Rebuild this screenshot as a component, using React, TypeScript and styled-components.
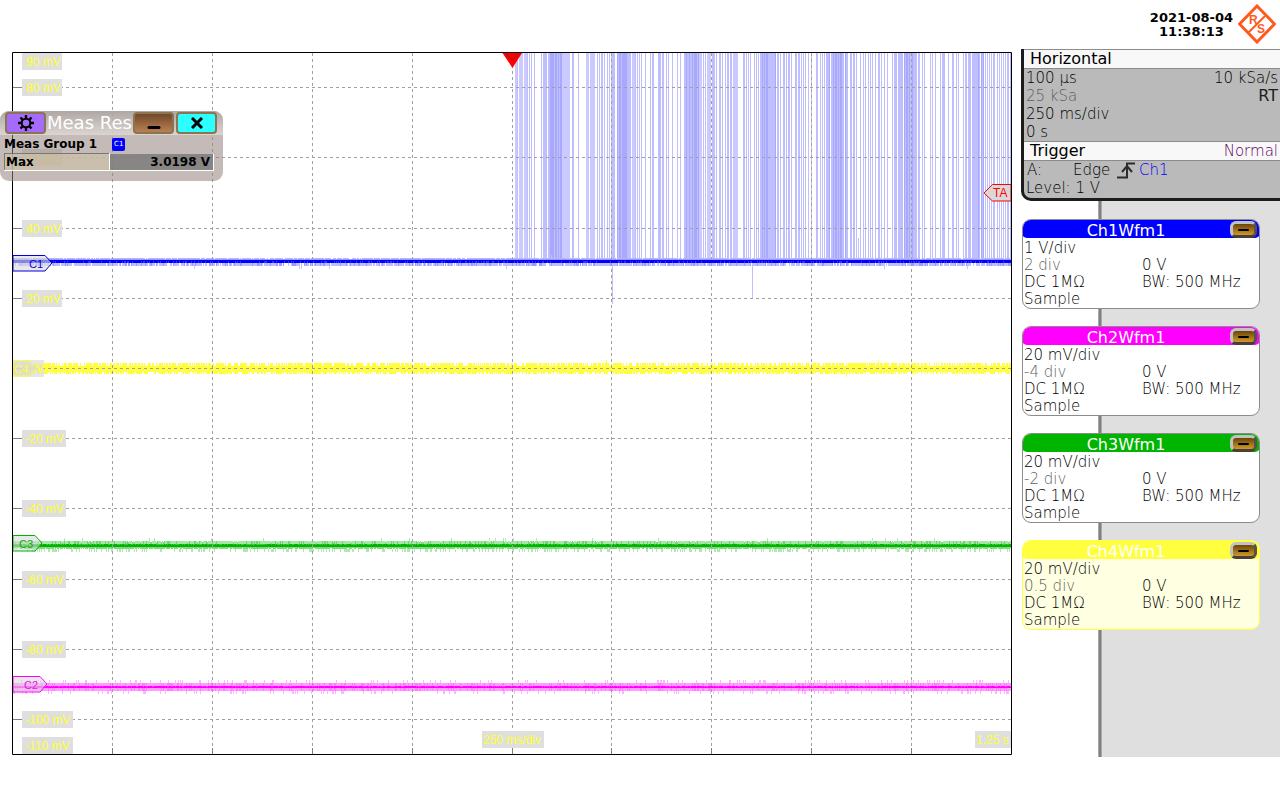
import React from "react";
import styled, { createGlobalStyle } from "styled-components";

const GlobalStyle = createGlobalStyle`
  * { box-sizing: border-box; }
  body {
    margin: 0;
    background: #fff;
    color: #000;
    font-family: "DejaVu Sans", Verdana, sans-serif;
    font-size: 15px;
    font-weight: 200;
  }
`;

const Screen = styled.div`
  position: relative;
  display: flex;
  flex-direction: column;
  min-height: 100vh;
  padding-bottom: 43px;
`;

const TopBar = styled.header`
  display: flex;
  justify-content: flex-end;
  gap: 5px;
  height: 49px;
  padding: 4px 4px 0 0;
`;

const Clock = styled.time`
  padding-top: 7px;
  color: #000;
  font-size: 13px;
  font-weight: 700;
  line-height: 14px;
  text-align: center;
`;

const Main = styled.main`
  display: grid;
  flex: 1;
  grid-template-columns: minmax(0, 1fr) 268px;
`;

const PlotArea = styled.div`
  padding: 3px 0 0 12px;
`;

const Plot = styled.svg`
  display: block;
  width: 100%;
  height: auto;
  font-family: "Liberation Sans", Arial, sans-serif;
  font-weight: 400;
`;

const Sidebar = styled.aside`
  display: flex;
  flex-direction: column;
`;

const Setup = styled.section`
  margin-left: 9px;
  padding-bottom: 1px;
  overflow: hidden;
  border: solid #1c1c1c;
  border-width: 0 0 3px 3px;
  border-bottom-left-radius: 10px;
  background: #bababa;
`;

const Band = styled.div`
  display: flex;
  justify-content: space-between;
  align-items: center;
  height: 20px;
  padding: 0 2px 0 6px;
  border: solid #8c8c8c;
  border-width: 1px 0;
  background: #f8f8f8;
`;

const BandTitle = styled.h2`
  margin: 0;
  font-size: 16px;
  font-weight: 400;
  line-height: 18px;
`;

const Mode = styled.span`
  color: #600060;
`;

const SetupLine = styled.div<{ $dim?: boolean }>`
  display: flex;
  justify-content: space-between;
  padding: 0 2px;
  color: ${(p) => (p.$dim ? "#606060" : "#000")};
  line-height: 18px;
`;

const Strong = styled.span`
  color: #1c1c1c;
  font-size: 16px;
  font-weight: 400;
`;

const TriggerLine = styled.div`
  display: grid;
  grid-template-columns: 46px 44px 22px 1fr;
  align-items: center;
  padding: 0 3px;
  line-height: 18px;
`;

const Source = styled.span`
  color: #00f;
`;

const ChannelList = styled.div`
  display: flex;
  flex: 1;
  flex-direction: column;
  gap: 17px;
  padding: 18px 20px 18px 10px;
  background: linear-gradient(
    to left,
    #dfdfdf 178px,
    #a9a9a9 178px 179px,
    #808080 179px 181px,
    #a9a9a9 181px 182px,
    #fff 182px
  );
`;

const Card = styled.section<{ $edge: string; $fill: string }>`
  overflow: hidden;
  border: 1px solid ${(p) => p.$edge};
  border-radius: 9px;
  background: ${(p) => p.$fill};
`;

const CardHead = styled.header<{ $color: string }>`
  display: grid;
  grid-template-columns: 208px 30px;
  align-items: center;
  height: 19px;
  margin: -1px -1px 0;
  border-radius: 8px 8px 5px 5px;
  background: ${(p) => p.$color};
`;

const CardTitle = styled.h3`
  margin: 0;
  padding-top: 2px;
  color: #fff;
  font-size: 16px;
  font-weight: 400;
  line-height: 19px;
  text-align: center;
`;

const FoldButton = styled.button`
  display: grid;
  place-items: center;
  width: 27px;
  height: 17px;
  padding: 0;
  border: 3px solid;
  border-color: #c2c2c2 #585048 #484038 #c2c2c2;
  border-radius: 6px;
  background: linear-gradient(#6b4408, #d09a28);
`;

const Minus = styled.span<{ $width: number }>`
  display: block;
  width: ${(p) => p.$width}px;
  height: 2px;
  border-radius: 1px;
  background: #000;
`;

const CardBody = styled.div`
  display: grid;
  grid-template-columns: 118px 1fr;
  padding: 2px 0 0 1px;
  line-height: 17px;
  white-space: nowrap;
`;

const Value = styled.span<{ $dim?: boolean; $wide?: boolean }>`
  grid-column: ${(p) => (p.$wide ? "1 / -1" : "auto")};
  color: ${(p) => (p.$dim ? "#606060" : "#000")};
`;

const ResultWindow = styled.section`
  position: absolute;
  top: 111px;
  left: 0;
  width: 223px;
  height: 70px;
  border-radius: 9px;
  background: rgba(150, 132, 127, 0.56);
  color: #000;
  font-size: 12px;
  font-weight: 700;
`;

const WindowBar = styled.header`
  display: grid;
  grid-template-columns: 41px 85px 41px 41px;
  column-gap: 1px;
  align-items: center;
  height: 24px;
  padding-left: 5px;
  border-radius: 9px 9px 0 0;
  background: linear-gradient(rgba(170, 162, 158, 0.8), rgba(225, 220, 216, 0.8));
`;

const WindowTitle = styled.h2`
  overflow: hidden;
  margin: 0;
  color: #fff;
  font-size: 18px;
  font-weight: 400;
  line-height: 22px;
  white-space: nowrap;
`;

const WindowButton = styled.button<{ $fill: string; $apart?: boolean }>`
  display: grid;
  place-items: center;
  width: 41px;
  height: 22px;
  margin-left: ${(p) => (p.$apart ? 1 : 0)}px;
  padding: 0;
  border: 2px solid #8c7450;
  border-radius: 4px;
  background: ${(p) => p.$fill};
`;

const Group = styled.div`
  display: flex;
  align-items: center;
  gap: 15px;
  height: 18px;
  padding-left: 4px;
  line-height: 20px;
`;

const Badge = styled.span`
  width: 13px;
  height: 13px;
  border-radius: 2px;
  background: #00f;
  color: #fff;
  font-size: 7px;
  font-weight: 400;
  line-height: 13px;
  text-align: center;
`;

const Results = styled.table`
  width: 210px;
  margin-left: 4px;
  border-collapse: collapse;
  table-layout: fixed;

  th, td {
    height: 17px;
    padding: 0 3px 0 1px;
    border: solid #fff;
    border-width: 0 1px 1px 0;
    line-height: 14px;
  }
  th {
    border-top: 1px solid #777;
    border-left: 1px solid #777;
    background: rgba(204, 192, 168, 0.75);
    text-align: left;
  }
  td {
    background: rgba(125, 125, 125, 0.85);
    text-align: right;
  }
`;

const WIDTH = 1000;
const HEIGHT = 703;

/* Small linear generator, so that each trace has the same noise on every render. */
function noise(seed: number) {
  let s = seed;
  return () => {
    s = (s * 1103515245 + 12345) % 2147483648;
    return s / 2147483648;
  };
}

/* One-pixel columns between y0 and y1, with `fill` as the share that is drawn. */
function speckle(seed: number, y0: number, y1: number, fill: number) {
  const next = noise(seed);
  let d = "";
  for (let x = 1; x < WIDTH - 1; x++) {
    if (next() < fill) d += `M${x} ${y0}h1V${y1}h-1z`;
  }
  return d;
}

/* Bursts of the channel 1 signal: start and end in thirds of a pixel, from two anchors. */
const BURSTS: [number, string][] = [
  [488, "45-54 57-69 72-84 87-90 93-96 102-105 123-126 129-141 144-186 186-210 216-222 234-237 258-267 270-285 291-294 297-300 303-309 312-315 321-324 327-330 333-345 351-384 384-393 396-408 411-414 417-420 423-426 435-438 450-453 456-462 474-483 486-492 498-501 504-507 516-519 531-534 540-543 552-606 609-612 615-618 621-633 636-642 642-645 648-651 657-663 666-669 675-678 681-687 690-696 699-714 729-735 738-741 744-747"],
  [738, "0-3 12-15 18-21 24-27 30-78 81-87 90-93 99-105 108-111 114-120 123-126 135-141 144-150 153-156 159-162 165-168 174-177 183-186 198-204 210-213 216-219 222-225 228-240 243-282 285-294 300-306 309-315 318-321 330-333 339-342 345-348 354-357 360-363 366-369 375-378 384-390 393-396 402-405 411-414 426-429 432-441 444-459 462-501 504-510 516-519 522-525 540-543 546-549 555-558 570-573 576-585 594-597 606-612 618-621 624-627 639-642 645-651 654-663 666-690 693-702 705-708 711-714 717-720 723-726 729-735 741-744 747-750 753-756 759-762 765-768 771-777 780-783"],
];
const DENSE: [number, string][] = [
  [488, "150-162 165-171 174-177 180-186 351-354 357-363 366-381 558-561 567-570 576-579 582-591 594-597"],
  [738, "36-39 42-45 48-54 75-78 237-240 249-252 255-261 264-267 270-276 285-288 462-465 468-474 477-480 486-489 684-687 693-696 699-702"],
];
const PALE: [number, string][] = [
  [488, "45-51 57-69 72-81 186-210 258-267 270-285 396-405 597-606 621-633 699-714"],
];

function bars(groups: [number, string][]) {
  return groups
    .map(([origin, list]) =>
      list
        .split(" ")
        .map((run) => {
          const [a, b] = run.split("-").map(Number);
          const x0 = origin + Math.round(a / 3);
          const x1 = origin + Math.round(b / 3);
          return `M${x0} 1H${x1}V207H${x0}z`;
        })
        .join("")
    )
    .join("");
}

const COLUMNS = [100, 200, 300, 400, 500, 599, 699, 799, 899];
const ROWS = [35, 105, 176, 246, 316, 386, 456, 527, 597, 667];

const SCALE: { text: string; x: number; y: number; w: number; tx: number }[] = [
  { text: "90 mV", x: 10, y: 1, w: 40, tx: 14 },
  { text: "80 mV", x: 10, y: 27, w: 40, tx: 14 },
  { text: "60 mV", x: 10, y: 97, w: 40, tx: 14 },
  { text: "40 mV", x: 10, y: 168, w: 40, tx: 14 },
  { text: "20 mV", x: 10, y: 238, w: 40, tx: 14 },
  { text: "0 V", x: 1, y: 308, w: 31, tx: 14 },
  { text: "-20 mV", x: 10, y: 378, w: 44, tx: 13 },
  { text: "-40 mV", x: 10, y: 448, w: 44, tx: 13 },
  { text: "-60 mV", x: 10, y: 519, w: 44, tx: 13 },
  { text: "-80 mV", x: 10, y: 589, w: 44, tx: 13 },
  { text: "-100 mV", x: 10, y: 659, w: 51, tx: 13 },
  { text: "-110 mV", x: 10, y: 685, w: 51, tx: 13 },
  { text: "250 ms/div", x: 470, y: 679, w: 62, tx: 471 },
  { text: "1.25 s", x: 963, y: 679, w: 36, tx: 964 },
];

const FLAGS = [
  { name: "C1", y: 203, body: 33, text: 17, color: "#0000e0" },
  { name: "C4", y: 308, body: 18, text: 2, color: "#ffff30" },
  { name: "C3", y: 483, body: 23, text: 7, color: "#00b400" },
  { name: "C2", y: 624, body: 28, text: 12, color: "#ff00ff" },
];

function Oscillogram() {
  return (
    <Plot viewBox={`0 0 ${WIDTH} ${HEIGHT}`} role="img" aria-label="Waveforms">
      <rect width={WIDTH} height={HEIGHT} fill="#fff" />
      <g shapeRendering="crispEdges">
        <path d={bars(BURSTS)} fill="#bfbfff" />
        <path d={bars(PALE)} fill="#cacaff" />
        <path d={bars(DENSE)} fill="#a9a9fc" />
        <path d="M600 212h1v40h-1zM740 212h1v34h-1zM846 186h1v20h-1zM539 203h1v4h-1z" fill="#bfbfff" />

        <path d={speckle(11, 206, 208, 0.88)} fill="#b4b4ff" />
        <path d="M1 207H999V211H1z" fill="#9c9cff" />
        <path d={speckle(12, 211, 214, 0.85)} fill="#c0c0ff" />
        <path d={speckle(13, 211, 214, 0.2)} fill="#9c9cff" />
        <path d={speckle(14, 214, 217, 0.008)} fill="#c8c8ff" />
        <path d="M1 208H999V211H1z" fill="#00f" />
        <path d={speckle(15, 209, 211, 0.25)} fill="#3030ff" />

        <path d="M1 314H999V320H1z" fill="#ffff40" />
        <path d={speckle(21, 311, 314, 0.65)} fill="#ffff40" />
        <path d={speckle(22, 320, 322, 0.6)} fill="#ffff40" />
        <path d="M594 308h1v4h-1zM866 308h1v4h-1zM834 321h1v4h-1z" fill="#ffff40" />

        <path d="M1 490H999V496H1z" fill="#80d980" />
        <path d={speckle(31, 489, 492, 0.9)} fill="#a6e6a6" />
        <path d={speckle(32, 489, 497, 0.2)} fill="#70d470" />
        <path d={speckle(33, 496, 497, 0.8)} fill="#80d980" />
        <path d={speckle(34, 497, 500, 0.3)} fill="#b0e9b0" />
        <path d={speckle(35, 486, 489, 0.02)} fill="#b0e9b0" />
        <path d="M1 492H999V495H1z" fill="#00b400" />
        <path d={speckle(36, 492, 493, 0.5)} fill="#40c740" />

        <path d="M1 631H999V639H1z" fill="#ff9cff" />
        <path d={speckle(41, 631, 639, 0.25)} fill="#ff7cff" />
        <path d={speckle(42, 628, 631, 0.12)} fill="#ffb4ff" />
        <path d={speckle(43, 639, 642, 0.14)} fill="#ffb4ff" />
        <path d="M1 634H999V636H1z" fill="#ff00ff" />
        <path d={speckle(44, 634, 635, 0.3)} fill="#ff40ff" />

        {COLUMNS.map((x) => (
          <path key={x} d={`M${x}.5 1V702`} stroke="#a0a0a0" strokeDasharray="3 3" />
        ))}
        {ROWS.map((y) => (
          <path key={y} d={`M0 ${y}.5H999`} stroke="#a0a0a0" strokeDasharray="3 3" />
        ))}
        {COLUMNS.map((x) => (
          <path key={x} d={`M${x}.5 696V702`} stroke="#808080" />
        ))}
        {ROWS.map((y) => (
          <path key={y} d={`M1 ${y}.5H10`} stroke="#808080" />
        ))}
      </g>

      {SCALE.map((s) => (
        <g key={s.text}>
          <rect x={s.x} y={s.y} width={s.w} height="17" fill="#dfdfdf" fillOpacity={s.text === "0 V" ? 0.75 : 1} />
          <text x={s.tx} y={s.y + 13} fontSize="12" fill="#ffff30">
            {s.text}
          </text>
        </g>
      ))}

      {FLAGS.map((f) => (
        <g key={f.name}>
          <path
            d={`M1 ${f.y}.5H${f.body}L${f.body + 7} ${f.y + 8}L${f.body} ${f.y + 16}H1z`}
            fill="#d8d8d8"
            fillOpacity="0.6"
            stroke={f.color}
          />
          <text x={f.text} y={f.y + 13} fontSize="11" fill={f.color}>
            {f.name}
          </text>
        </g>
      ))}

      <path d="M980.5 132.500H999V149H980.500L972 141z" fill="#d8d8d8" stroke="#f00" />
      <text x="981" y="145" fontSize="12" fill="#f00">
        TA
      </text>
      <path d="M490.500 1H510L500.500 16z" fill="#f00" />
      <path d="M494 2L500.500 8L507 2" fill="none" stroke="#703030" />
      <path d="M.5 .5H999.500V702.500H.5z" fill="none" stroke="#000" />
    </Plot>
  );
}

function Logo() {
  return (
    <svg width="38" height="40" viewBox="0 0 38 40" role="img" aria-label="Rohde and Schwarz">
      <path d="M19 2L36.500 20L19 38L1.500 20z" fill="none" stroke="#ff5a1e" strokeWidth="3" />
      <path d="M27 12L10 29" stroke="#ff5a1e" strokeWidth="2" />
      <text x="11" y="20" fontFamily="Liberation Sans, sans-serif" fontSize="12" fontWeight="700" fill="#ff5a1e">R</text>
      <text x="19" y="29" fontFamily="Liberation Sans, sans-serif" fontSize="12" fontWeight="700" fill="#ff5a1e">S</text>
    </svg>
  );
}

function Gear() {
  return (
    <svg width="16" height="16" viewBox="0 0 16 16" aria-hidden="true">
      <circle cx="8" cy="8" r="4.300" fill="none" stroke="#000" strokeWidth="2" />
      <path
        d="M8 0V3.500M8 12.500V16M0 8H3.500M12.500 8H16M2.500 2.500L4.800 4.800M11.200 11.200L13.500 13.500M13.500 2.500L11.200 4.800M4.800 11.200L2.500 13.500"
        stroke="#000"
        strokeWidth="2.400"
      />
    </svg>
  );
}

const CHANNELS = [
  { name: "Ch1Wfm1", color: "#0000ff", scale: "1 V/div", position: "2 div" },
  { name: "Ch2Wfm1", color: "#ff00ff", scale: "20 mV/div", position: "-4 div" },
  { name: "Ch3Wfm1", color: "#00b400", scale: "20 mV/div", position: "-2 div" },
  { name: "Ch4Wfm1", color: "#ffff40", scale: "20 mV/div", position: "0.5 div", active: true },
];

export default function App() {
  return (
    <>
      <GlobalStyle />
      <Screen>
        <TopBar>
          <Clock dateTime="2021-08-04T11:38:13">
            2021-08-04
            <br />
            11:38:13
          </Clock>
          <Logo />
        </TopBar>

        <Main>
          <PlotArea>
            <Oscillogram />
          </PlotArea>

          <Sidebar>
            <Setup>
              <Band>
                <BandTitle>Horizontal</BandTitle>
              </Band>
              <SetupLine>
                <span>100 µs</span>
                <span>10 kSa/s</span>
              </SetupLine>
              <SetupLine $dim>
                <span>25 kSa</span>
                <Strong>RT</Strong>
              </SetupLine>
              <SetupLine>250 ms/div</SetupLine>
              <SetupLine>0 s</SetupLine>
              <Band>
                <BandTitle>Trigger</BandTitle>
                <Mode>Normal</Mode>
              </Band>
              <TriggerLine>
                <span>A:</span>
                <span>Edge</span>
                <svg width="18" height="17" viewBox="0 0 18 17" aria-hidden="true">
                  <path d="M0 15.500H10V1.500H18M5 10L10 4L15 10" fill="none" stroke="#2c2c2c" strokeWidth="2" />
                </svg>
                <Source>Ch1</Source>
              </TriggerLine>
              <SetupLine>Level: 1 V</SetupLine>
            </Setup>

            <ChannelList>
              {CHANNELS.map((c) => (
                <Card key={c.name} $edge={c.active ? c.color : "#8c8c8c"} $fill={c.active ? "#ffffe2" : "#fff"}>
                  <CardHead $color={c.color}>
                    <CardTitle>{c.name}</CardTitle>
                    <FoldButton type="button" aria-label={`Minimize ${c.name}`}>
                      <Minus $width={11} />
                    </FoldButton>
                  </CardHead>
                  <CardBody>
                    <Value $wide>{c.scale}</Value>
                    <Value $dim>{c.position}</Value>
                    <Value>0 V</Value>
                    <Value>DC 1MΩ</Value>
                    <Value>BW: 500 MHz</Value>
                    <Value $wide>Sample</Value>
                  </CardBody>
                </Card>
              ))}
            </ChannelList>
          </Sidebar>
        </Main>

        <ResultWindow>
          <WindowBar>
            <WindowButton type="button" aria-label="Settings" $fill="#a56bff">
              <Gear />
            </WindowButton>
            <WindowTitle>Meas Res</WindowTitle>
            <WindowButton type="button" aria-label="Minimize" $fill="linear-gradient(#70492a, #b98052)">
              <svg width="14" height="14" viewBox="0 0 14 14" aria-hidden="true">
                <path d="M2 11.500H12" stroke="#000" strokeWidth="3" strokeLinecap="round" />
              </svg>
            </WindowButton>
            <WindowButton type="button" aria-label="Close" $fill="#2cffff" $apart>
              <svg width="12" height="12" viewBox="0 0 12 12" aria-hidden="true">
                <path d="M1 1L11 11M11 1L1 11" stroke="#000" strokeWidth="3" />
              </svg>
            </WindowButton>
          </WindowBar>
          <Group>
            <span>Meas Group 1</span>
            <Badge>C1</Badge>
          </Group>
          <Results>
            <tbody>
              <tr>
                <th scope="row">Max</th>
                <td>3.0198 V</td>
              </tr>
            </tbody>
          </Results>
        </ResultWindow>
      </Screen>
    </>
  );
}
